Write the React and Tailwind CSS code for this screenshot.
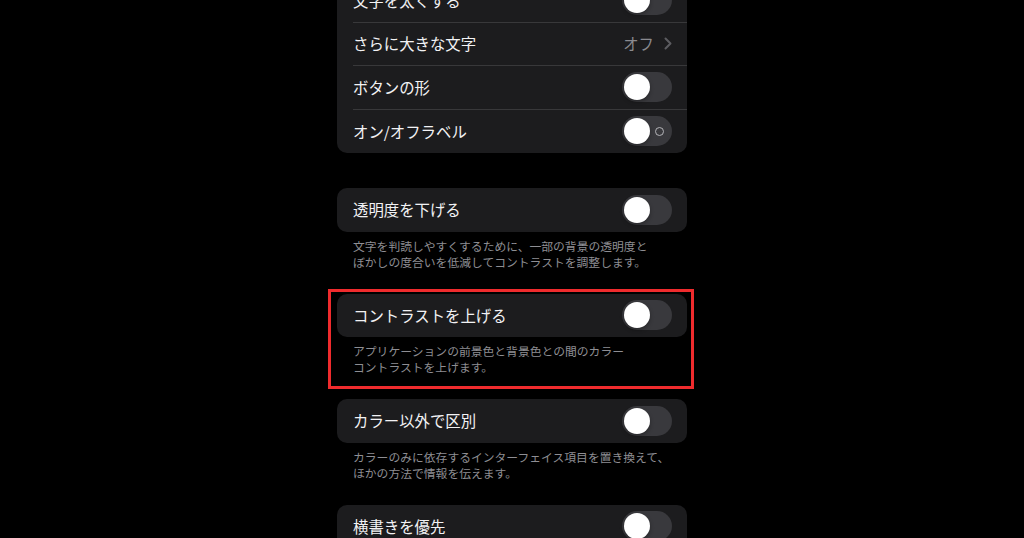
import React from 'react';

const font = { fontFamily: '"Noto Sans CJK JP", "Noto Sans", sans-serif' };

function Toggle({ label = false }) {
  return (
    <div className="relative flex h-[30px] w-[50px] items-center rounded-full bg-[#39393d] p-[2px]">
      <div className="h-[26px] w-[26px] rounded-full bg-white shadow-[0_2px_4px_rgba(0,0,0,0.3)]" />
      {label && (
        <div className="ml-[5px] h-[9px] w-[9px] rounded-full border border-[#b4b4b8]" />
      )}
    </div>
  );
}

function Row({ title, last = false, children }) {
  return (
    <div className="flex h-[43.5px] pl-4">
      <div
        className={
          'flex flex-1 items-center justify-between pr-[15px] ' +
          (last ? '' : 'border-b border-[#38383a]')
        }
      >
        <span className="text-[15.4px] leading-none text-[#f2f2f4]">{title}</span>
        {children}
      </div>
    </div>
  );
}

function Card({ children, className = '' }) {
  return <div className={'overflow-hidden rounded-[10px] bg-[#1c1c1e] ' + className}>{children}</div>;
}

function Footer({ lines }) {
  return (
    <div className="px-4 pt-[6px] pb-[24px] text-[11.8px] leading-[16px] text-[#8e8e93]">
      {lines.map((l) => (
        <div key={l} className="whitespace-nowrap">{l}</div>
      ))}
    </div>
  );
}

export default function App() {
  return (
    <div className="flex h-[538px] w-[1024px] justify-center overflow-hidden bg-black" style={font}>
      <div className="w-[350px]">
        <Card className="-mt-[21px]">
          <Row title="文字を太くする">
            <Toggle />
          </Row>
          <Row title="さらに大きな文字">
            <div className="flex items-center gap-[10px] text-[15.4px] leading-none text-[#8a8a8f]">
              <span>オフ</span>
              <svg width="8" height="13" viewBox="0 0 8 13" fill="none">
                <path d="M1.5 1.5l5 5-5 5" stroke="#5c5c60" strokeWidth="2" strokeLinecap="round" strokeLinejoin="round" />
              </svg>
            </div>
          </Row>
          <Row title="ボタンの形">
            <Toggle />
          </Row>
          <Row title="オン/オフラベル" last>
            <Toggle label />
          </Row>
        </Card>

        <Card className="mt-[35px]">
          <Row title="透明度を下げる" last>
            <Toggle />
          </Row>
        </Card>
        <Footer
          lines={[
            '文字を判読しやすくするために、一部の背景の透明度と',
            'ぼかしの度合いを低減してコントラストを調整します。',
          ]}
        />

        <div className="relative">
          <Card>
            <Row title="コントラストを上げる" last>
              <Toggle />
            </Row>
          </Card>
          <Footer
            lines={['アプリケーションの前景色と背景色との間のカラー', 'コントラストを上げます。']}
          />
          <div className="pointer-events-none absolute -left-[9px] -right-[7px] -top-[5px] bottom-[10px] border-[3px] border-[#ef2b2d]" />
        </div>

        <Card>
          <Row title="カラー以外で区別" last>
            <Toggle />
          </Row>
        </Card>
        <Footer
          lines={[
            'カラーのみに依存するインターフェイス項目を置き換えて、',
            'ほかの方法で情報を伝えます。',
          ]}
        />

        <Card>
          <Row title="横書きを優先" last>
            <Toggle />
          </Row>
        </Card>
      </div>
    </div>
  );
}
